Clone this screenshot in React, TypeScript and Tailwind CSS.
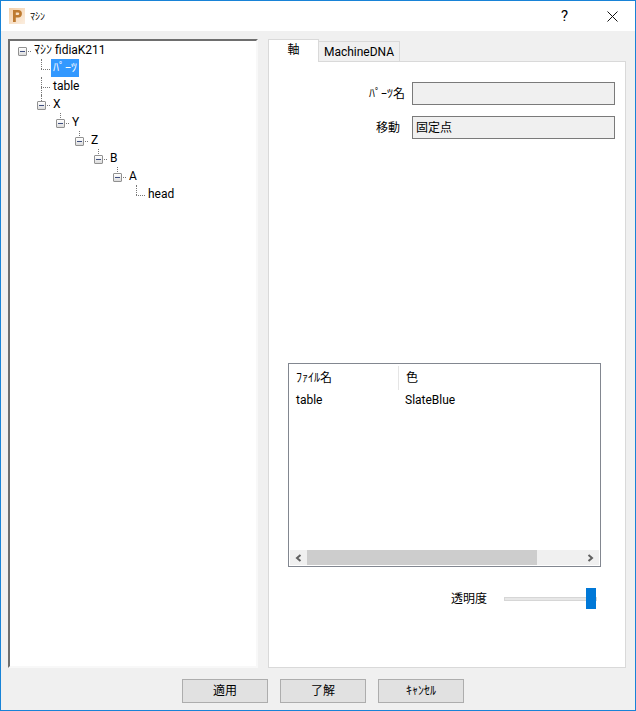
const UI_FONT = "font-['Roboto','Noto_Sans_CJK_JP',sans-serif]";

function Expander() {
  return (
    <span className="relative top-px flex h-[9px] w-[9px] shrink-0 items-center justify-center rounded-[1px] border border-[#919191] bg-gradient-to-b from-white to-[#dcdcdc]">
      <span className="h-px w-[5px] bg-[#3f4f80]" />
    </span>
  );
}

function TreeRow({
  indent,
  label,
  leaf,
  selected,
  stem,
}: {
  indent: string;
  label: string;
  leaf?: boolean;
  selected?: boolean;
  stem?: string;
}) {
  return (
    <div className={`relative flex h-[18px] items-center ${indent}`}>
      {stem && <span className={`absolute top-0 w-0 border-l border-dotted border-[#777] ${stem}`} />}
      {leaf ? (
        <span className="relative top-px w-[9px] border-t border-dotted border-[#777]" />
      ) : (
        <>
          <Expander />
          <span className="relative top-px ml-px w-[3px] border-t border-dotted border-[#777]" />
        </>
      )}
      <span
        className={`ml-px flex h-[18px] items-center px-[2px] text-[12px] leading-none ${
          selected ? "bg-[#3399ff] text-white" : "text-black"
        }`}
      >
        {label}
      </span>
    </div>
  );
}

function ReadOnlyField({ label, value, labelClass }: { label: string; value?: string; labelClass: string }) {
  return (
    <div className="flex items-center">
      <span className={`text-right text-[12px] text-black ${labelClass}`}>{label}</span>
      <div className="ml-auto flex h-[23px] w-[203px] items-center border border-[#7a7a7a] bg-[#f0f0f0] px-[3px] text-[12px] leading-none text-black">
        {value}
      </div>
    </div>
  );
}

function DialogButton({ label }: { label: string }) {
  return (
    <button
      type="button"
      className="flex h-[24px] w-[86px] items-center justify-center border border-[#adadad] bg-[#e1e1e1] text-[12px] text-black"
    >
      {label}
    </button>
  );
}

export default function App() {
  return (
    <div className={`flex h-[711px] w-[636px] flex-col overflow-hidden border border-[#1883d7] bg-[#f0f0f0] ${UI_FONT}`}>
      {/* title bar */}
      <div className="flex h-[30px] shrink-0 items-center bg-white pl-[8px]">
        <svg width="16" height="16" viewBox="0 0 16 16" className="shrink-0">
          <defs>
            <linearGradient id="pbg" x1="0" y1="0" x2="1" y2="1">
              <stop offset="0" stopColor="#f3cfa8" />
              <stop offset="1" stopColor="#fbeee0" />
            </linearGradient>
          </defs>
          <rect width="16" height="16" fill="url(#pbg)" />
          <path d="M4 2h5.2a3.7 3.7 0 0 1 0 7.4H6.8V14H4z M6.8 4.4v2.7h2.1a1.35 1.35 0 0 0 0-2.7z" fill="#bd7a30" fillRule="evenodd" />
        </svg>
        <span className="ml-[5px] text-[10px] text-black">ﾏｼﾝ</span>
        <span className="ml-auto mr-[39px] text-[15px] leading-none text-black">?</span>
        <svg width="11" height="11" viewBox="0 0 11 11" className="mr-[17px] shrink-0">
          <path d="M.5.5l10 10M10.5.5l-10 10" stroke="#111" strokeWidth="1" fill="none" />
        </svg>
      </div>

      {/* body */}
      <div className="flex h-[637px] shrink-0 pl-[7px] pr-[9px] pt-[8px]">
        {/* tree */}
        <div className="h-[629px] w-[250px] shrink-0 border-2 border-b-[#f8f8f8] border-l-[#6e6e6e] border-r-[#f8f8f8] border-t-[#6e6e6e] bg-white">
          <TreeRow indent="pl-[8px]" label="ﾏｼﾝ fidiaK211" />
          <TreeRow indent="pl-[31px]" label="ﾊﾟｰﾂ" leaf selected stem="left-[31px] h-[10px]" />
          <TreeRow indent="pl-[31px]" label="table" leaf stem="left-[31px] h-[18px]" />
          <TreeRow indent="pl-[27px]" label="X" stem="left-[31px] h-[6px]" />
          <TreeRow indent="pl-[46px]" label="Y" stem="left-[50px] h-[5px]" />
          <TreeRow indent="pl-[65px]" label="Z" stem="left-[69px] h-[5px]" />
          <TreeRow indent="pl-[84px]" label="B" stem="left-[88px] h-[5px]" />
          <TreeRow indent="pl-[103px]" label="A" stem="left-[107px] h-[5px]" />
          <TreeRow indent="pl-[126px]" label="head" leaf stem="left-[126px] h-[10px]" />
        </div>

        {/* tabs */}
        <div className="ml-[10px] flex w-[358px] flex-col">
          <div className="flex h-[22px] shrink-0 items-end">
            <div className="relative z-10 flex h-[23px] w-[51px] -mb-px items-center justify-center border border-b-0 border-[#d9d9d9] bg-white pb-[3px] text-[12px] text-black">
              軸
            </div>
            <div className="flex h-[20px] w-[81px] items-center justify-center border border-b-0 border-l-0 border-[#d9d9d9] bg-[#f0f0f0] text-[12px] text-black">
              MachineDNA
            </div>
          </div>
          <div className="flex h-[607px] flex-col border border-[#d9d9d9] bg-white pl-[19px] pr-[24px]">
            <div className="ml-auto mr-[-14px] mt-[20px] flex w-[300px] flex-col gap-[11px]">
              <ReadOnlyField label="ﾊﾟｰﾂ名" labelClass="w-[90px]" />
              <ReadOnlyField label="移動" labelClass="w-[85px]" value="固定点" />
            </div>

            {/* file list */}
            <div className="mt-[224px] flex h-[204px] w-[313px] shrink-0 flex-col border border-[#828790] bg-white p-px">
              <div className="flex h-[25px] items-center text-[12px] text-black">
                <span className="w-[109px] border-r border-[#e5e5e5] pl-[6px] leading-[24px]">ﾌｧｲﾙ名</span>
                <span className="pl-[7px]">色</span>
              </div>
              <div className="flex h-[19px] items-center text-[12px] text-black">
                <span className="w-[109px] pl-[6px]">table</span>
                <span className="pl-[6px]">SlateBlue</span>
              </div>
              <div className="flex-1" />
              <div className="flex h-[15px] items-stretch bg-[#f0f0f0]">
                <span className="flex w-[17px] items-center justify-center">
                  <svg width="7" height="8" viewBox="0 0 7 8"><path d="M5.5 1L2 4l3.5 3" fill="none" stroke="#606060" strokeWidth="2" /></svg>
                </span>
                <span className="w-[230px] bg-[#cdcdcd]" />
                <span className="flex-1" />
                <span className="flex w-[17px] items-center justify-center">
                  <svg width="7" height="8" viewBox="0 0 7 8"><path d="M1.5 1L5 4 1.5 7" fill="none" stroke="#606060" strokeWidth="2" /></svg>
                </span>
              </div>
            </div>

            {/* opacity */}
            <div className="mt-[21px] flex h-[22px] items-center">
              <span className="ml-[163px] text-[12px] text-black">透明度</span>
              <div className="relative ml-[17px] h-[4px] w-[93px] border border-[#d6d6d6] bg-[#e7e7e7]">
                <span className="absolute -top-[10px] right-0 h-[21px] w-[10px] bg-[#0078d7]" />
              </div>
            </div>
          </div>
        </div>
      </div>

      {/* buttons */}
      <div className="flex flex-1 items-start pl-[181px] pt-[11px]">
        <div className="flex gap-[12px]">
          <DialogButton label="適用" />
          <DialogButton label="了解" />
          <DialogButton label="ｷｬﾝｾﾙ" />
        </div>
      </div>
    </div>
  );
}
